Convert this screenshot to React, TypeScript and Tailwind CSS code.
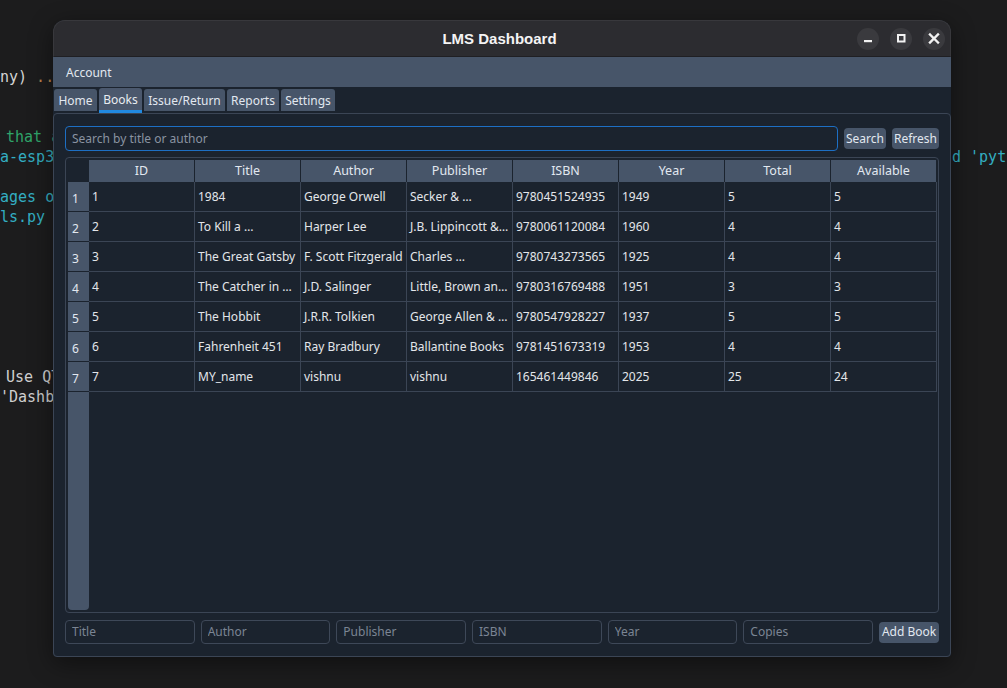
import React from "react";

// ─── DATA ─────────────────────────────────────────────────────────────────────

const columns = ["ID", "Title", "Author", "Publisher", "ISBN", "Year", "Total", "Available"];

const books = [
  ["1", "1984", "George Orwell", "Secker & …", "9780451524935", "1949", "5", "5"],
  ["2", "To Kill a …", "Harper Lee", "J.B. Lippincott &…", "9780061120084", "1960", "4", "4"],
  ["3", "The Great Gatsby", "F. Scott Fitzgerald", "Charles …", "9780743273565", "1925", "4", "4"],
  ["4", "The Catcher in …", "J.D. Salinger", "Little, Brown an…", "9780316769488", "1951", "3", "3"],
  ["5", "The Hobbit", "J.R.R. Tolkien", "George Allen & …", "9780547928227", "1937", "5", "5"],
  ["6", "Fahrenheit 451", "Ray Bradbury", "Ballantine Books", "9781451673319", "1953", "4", "4"],
  ["7", "MY_name", "vishnu", "vishnu", "165461449846", "2025", "25", "24"],
];

const tabs = [
  { label: "Home", w: "w-[43px]" },
  { label: "Books", w: "w-[43px]", active: true },
  { label: "Issue/Return", w: "w-[81px]" },
  { label: "Reports", w: "w-[52px]" },
  { label: "Settings", w: "w-[54px]" },
];

const formFields = ["Title", "Author", "Publisher", "ISBN", "Year", "Copies"];

// ─── DESKTOP CODE BEHIND THE WINDOW ───────────────────────────────────────────

function CodeBackdrop() {
  const mono = { fontFamily: '"DejaVu Sans Mono", "Liberation Mono", monospace' };
  return (
    <div className="absolute inset-0 text-[15px] leading-[20px] whitespace-pre" style={mono}>
      <div className="absolute left-0 top-[67px] text-[#d4d4d4]">
        ny)<span className="text-[#b9834d]"> ..</span>
      </div>
      <div className="absolute left-[-3px] top-[127px] text-[#2fa46a]"> that a</div>
      <div className="absolute left-0 top-[147px] text-[#33aec2]">a-esp32</div>
      <div className="absolute left-[952px] top-[147px] text-[#33aec2]">d 'pyth</div>
      <div className="absolute left-0 top-[187px] text-[#33aec2]">ages of</div>
      <div className="absolute left-0 top-[207px] text-[#33aec2]">ls.py (</div>
      <div className="absolute left-[-3px] top-[367px] text-[#cfcfcf]"> Use QT</div>
      <div className="absolute left-0 top-[387px] text-[#cfcfcf]">'Dashboard</div>
    </div>
  );
}

// ─── WINDOW CONTROLS ──────────────────────────────────────────────────────────

function WinButton({ kind }: { kind: "min" | "max" | "close" }) {
  return (
    <div className="w-[22px] h-[22px] rounded-full bg-[#3a3a3e] flex items-center justify-center">
      <svg width="22" height="22" viewBox="0 0 22 22">
        {kind === "min" && <rect x="7" y="12" width="8" height="2.2" fill="#f2f2f2" />}
        {kind === "max" && (
          <rect x="8" y="7" width="6.5" height="6.5" fill="none" stroke="#f2f2f2" strokeWidth="2" />
        )}
        {kind === "close" && (
          <path d="M7 6.5 L15 14.5 M15 6.5 L7 14.5" stroke="#f2f2f2" strokeWidth="2.4" strokeLinecap="square" />
        )}
      </svg>
    </div>
  );
}

// ─── BOOKS TABLE ──────────────────────────────────────────────────────────────

function BooksTable() {
  return (
    <div className="mt-[6px] flex-1 min-h-0 border border-[#3b4555] rounded-[4px] pt-[2px] pl-[2px] pr-[1px] pb-[2px] flex flex-col overflow-hidden">
      <div className="flex h-[22px] shrink-0">
        <div className="w-[21px] shrink-0" />
        {columns.map((c) => (
          <div
            key={c}
            className="w-[106px] shrink-0 bg-[#475569] border-r border-[#1b232e] flex items-center justify-center pt-[1px] text-[12.5px] text-[#e2e8f0]"
          >
            {c}
          </div>
        ))}
      </div>
      {books.map((row, i) => (
        <div key={i} className="flex h-[30px] shrink-0">
          <div className="w-[21px] shrink-0 bg-[#475569] border-b border-[#1b232e] flex items-center pl-[4px] pt-[5px] text-[12px] text-[#e2e8f0]">
            {i + 1}
          </div>
          {row.map((cell, j) => (
            <div
              key={j}
              className="w-[106px] shrink-0 border-r border-b border-[#3b4555] flex items-center pl-[3px] pt-[1px] text-[12px] text-[#e3e6ea] whitespace-nowrap overflow-hidden"
            >
              {cell}
            </div>
          ))}
        </div>
      ))}
      <div className="flex-1 flex">
        <div className="w-[21px] bg-[#475569] rounded-b-[4px]" />
      </div>
    </div>
  );
}

// ─── APP ──────────────────────────────────────────────────────────────────────

export default function App() {
  return (
    <div
      className="relative w-[1007px] h-[688px] overflow-hidden bg-[#1c1c1d]"
      style={{ fontFamily: '"Noto Sans", "Open Sans", sans-serif' }}
    >
      <CodeBackdrop />

      <div className="absolute left-[53px] top-[20px] w-[898px] h-[637px] flex flex-col bg-[#1b232e] rounded-t-[12px] rounded-b-[4px] shadow-[0_6px_24px_rgba(0,0,0,0.45)]">
        {/* title bar */}
        <div className="h-[37px] shrink-0 flex items-center bg-[#2c2c30] rounded-t-[12px] border border-[#38383c] border-b-[#1f1f23]">
          <div className="flex-1" />
          <div
            className="pt-[1px] text-[15px] font-bold text-[#f4f4f4]"
            style={{ fontFamily: '"Liberation Sans", Arial, sans-serif' }}
          >
            LMS Dashboard
          </div>
          <div className="flex-1 flex justify-end gap-[11px] pr-[5px]">
            <WinButton kind="min" />
            <WinButton kind="max" />
            <WinButton kind="close" />
          </div>
        </div>

        {/* menu bar */}
        <div className="h-[30px] shrink-0 bg-[#475569] flex items-center pl-[13px] pt-[1px] text-[12px] text-[#e2e8f0]">
          Account
        </div>

        {/* tabs */}
        <div className="h-[26px] shrink-0 flex items-start gap-[2px] pl-[1px] pt-[2px]">
          {tabs.map((t) =>
            t.active ? (
              <div
                key={t.label}
                className={`${t.w} h-[25px] mt-[-1px] bg-[#4b586d] rounded-t-[3px] border-b-[3px] border-[#2189e0] flex items-center justify-center pt-[1px] text-[12px] text-[#e8ecf1]`}
              >
                {t.label}
              </div>
            ) : (
              <div
                key={t.label}
                className={`${t.w} h-[22px] bg-[#475569] rounded-t-[3px] flex items-center justify-center pt-[1px] text-[12px] text-[#e2e8f0]`}
              >
                {t.label}
              </div>
            )
          )}
        </div>

        {/* tab panel */}
        <div className="flex-1 min-h-0 border border-[#3b4555] rounded-[4px] px-[11px] pt-[12px] pb-[12px] flex flex-col">
          <div className="h-[25px] shrink-0 flex items-center gap-[6px]">
            <input
              className="flex-1 h-[25px] border border-[#1d6fc4] rounded-[4px] bg-[#1b232e] px-[6px] text-[12px] text-[#e2e8f0] placeholder:text-[#8a93a1] outline-none"
              placeholder="Search by title or author"
            />
            <button className="w-[42px] h-[21px] bg-[#475569] rounded-[4px] text-[12px] text-[#e2e8f0]">
              Search
            </button>
            <button className="w-[47px] h-[21px] bg-[#475569] rounded-[4px] text-[12px] text-[#e2e8f0]">
              Refresh
            </button>
          </div>

          <BooksTable />

          <div className="mt-[7px] h-[24px] shrink-0 flex items-center gap-[6px]">
            {formFields.map((f) => (
              <input
                key={f}
                className="flex-1 min-w-0 h-[24px] border border-[#3e4858] rounded-[4px] bg-[#1b232e] px-[6px] pb-[1px] text-[12px] text-[#e2e8f0] placeholder:text-[#7b8594] outline-none"
                placeholder={f}
              />
            ))}
            <button className="w-[60px] h-[21px] bg-[#475569] rounded-[4px] text-[12px] text-[#e2e8f0]">
              Add Book
            </button>
          </div>
        </div>
      </div>
    </div>
  );
}
